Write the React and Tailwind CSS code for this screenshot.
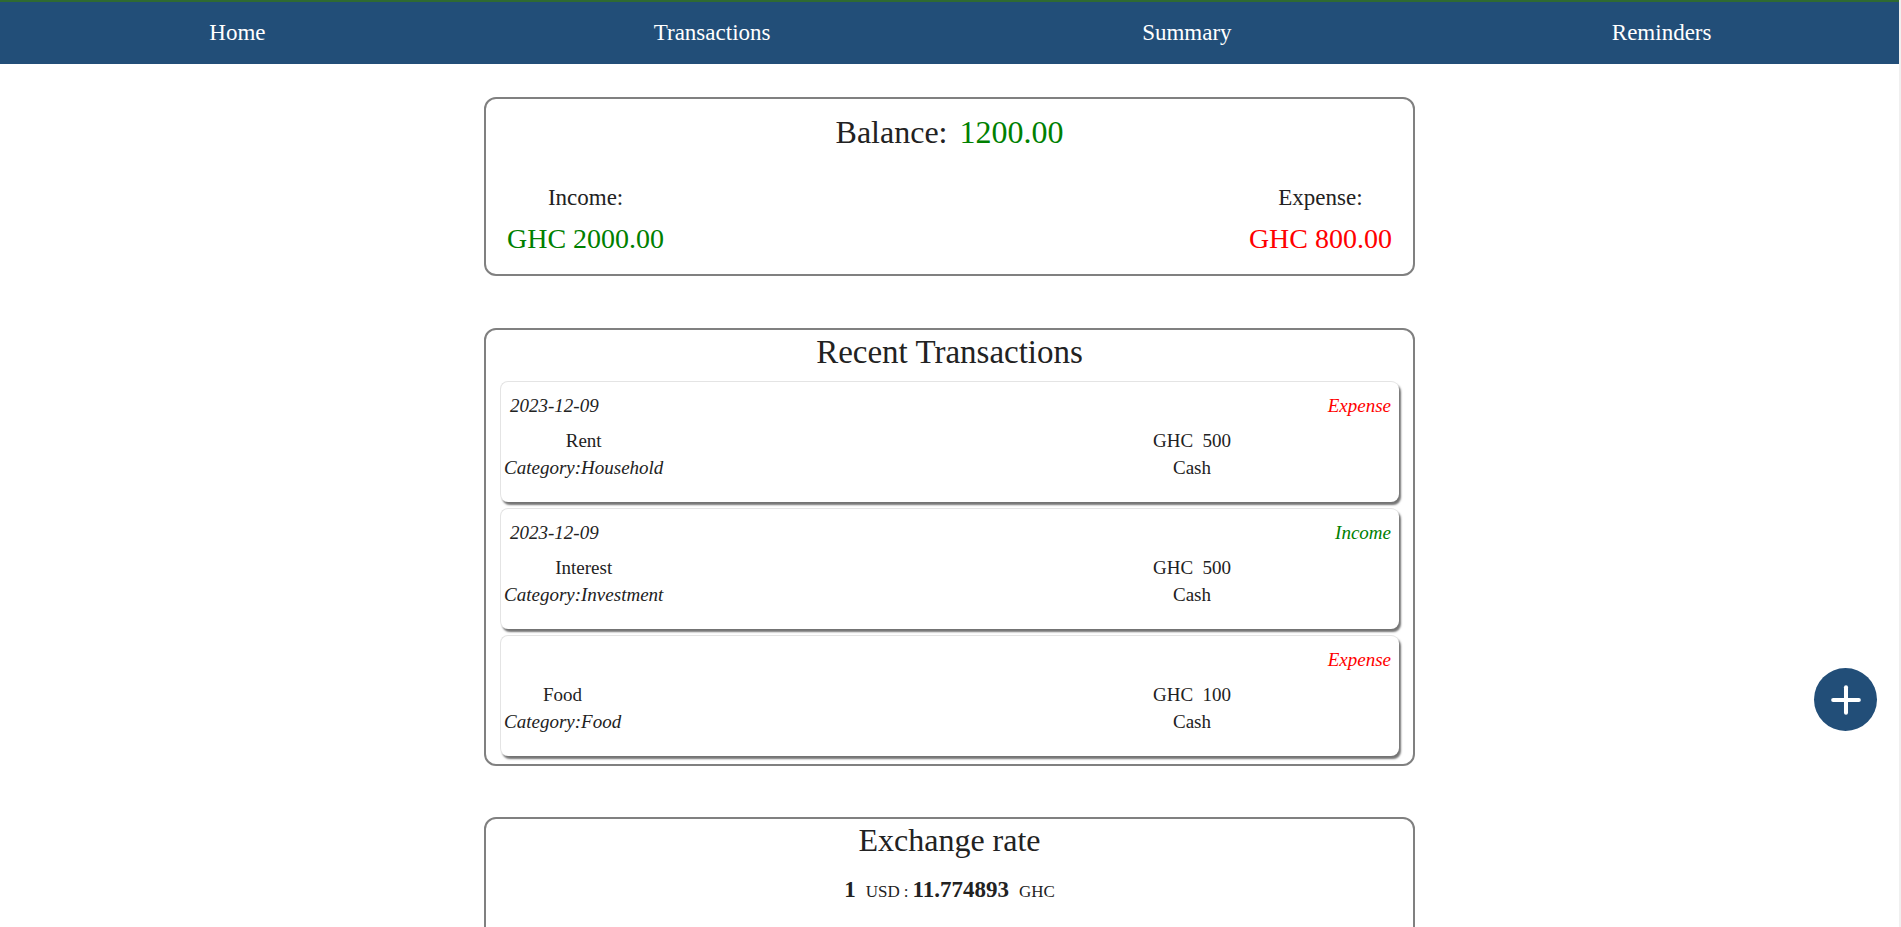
import { Plus } from "lucide-react";

const navItems = ["Home", "Transactions", "Summary", "Reminders"];

const transactions = [
  { date: "2023-12-09", type: "Expense", name: "Rent", category: "Household", amount: 500, method: "Cash" },
  { date: "2023-12-09", type: "Income", name: "Interest", category: "Investment", amount: 500, method: "Cash" },
  { date: "", type: "Expense", name: "Food", category: "Food", amount: 100, method: "Cash" },
];

const TransactionItem = ({ tx }) => (
  <div className="mb-[6px] rounded-[8px] border-t border-l border-[#e4e4e4] bg-white px-[3px] pt-[10px] pb-[21px] shadow-[2px_3px_2px_rgba(0,0,0,0.55)]">
    <div className="flex h-[27px] items-center justify-between pl-[6px] pr-[5px] text-[19px] italic leading-[27px]">
      <span className="text-[#222]">{tx.date}</span>
      <span className={tx.type === "Income" ? "text-[#008000]" : "text-[#ff0000]"}>{tx.type}</span>
    </div>
    <div className="mt-[8px] flex items-start text-[19px] leading-[27px] text-[#222]">
      <div className="flex flex-col items-center">
        <span>{tx.name}</span>
        <span className="italic">Category:{tx.category}</span>
      </div>
      <div className="ml-auto mr-[144px] flex w-[120px] flex-col items-center">
        <span className="whitespace-pre">{`GHC  ${tx.amount}`}</span>
        <span>{tx.method}</span>
      </div>
    </div>
  </div>
);

export default function App() {
  return (
    <div
      className="flex h-[927px] w-full overflow-hidden bg-white text-[#222]"
      style={{ fontFamily: '"Liberation Serif", "DejaVu Serif", serif' }}
    >
      <div className="relative flex-1">
        <nav className="grid h-[64px] grid-cols-4 border-t-2 border-[#2f6a32] bg-[#224e78] text-white">
          {navItems.map((item) => (
            <div key={item} className="flex items-center justify-center text-[23px]">
              {item}
            </div>
          ))}
        </nav>

        <main className="flex flex-col items-center">
          <section className="mt-[33px] w-[931px] rounded-[12px] border-2 border-[#808080] px-[21px] pt-[13px] pb-[17px]">
            <h2 className="text-center text-[32px] leading-[40px]">
              Balance: <span className="ml-[4px] text-[#008000]">1200.00</span>
            </h2>
            <div className="mt-[30px] flex justify-between">
              <div className="flex flex-col items-center">
                <span className="text-[23px] leading-[32px]">Income:</span>
                <span className="mt-[7px] text-[28px] leading-[36px] text-[#008000]">GHC 2000.00</span>
              </div>
              <div className="flex flex-col items-center">
                <span className="text-[23px] leading-[32px]">Expense:</span>
                <span className="mt-[7px] text-[28px] leading-[36px] text-[#ff0000]">GHC 800.00</span>
              </div>
            </div>
          </section>

          <section className="mt-[52px] w-[931px] rounded-[12px] border-2 border-[#808080] px-[14px] pt-[2px] pb-[2px]">
            <h2 className="text-center text-[33px] leading-[40px]">Recent Transactions</h2>
            <div className="mt-[9px]">
              {transactions.map((tx, i) => (
                <TransactionItem key={i} tx={tx} />
              ))}
            </div>
          </section>

          <section className="mt-[51px] h-[160px] w-[931px] rounded-[12px] border-2 border-[#808080] pt-[1px]">
            <h2 className="text-center text-[32px] leading-[40px]">Exchange rate</h2>
            <p className="mt-[15px] text-center leading-[30px]">
              <span className="text-[23px] font-bold">1</span>
              <span className="ml-[10px] text-[17px]">USD</span>
              <span className="ml-[4px] text-[17px]">:</span>
              <span className="ml-[4px] text-[23px] font-bold">11.774893</span>
              <span className="ml-[10px] text-[17px]">GHC</span>
            </p>
          </section>
        </main>

        <button
          type="button"
          className="absolute top-[668px] right-[22px] flex h-[63px] w-[63px] items-center justify-center rounded-full bg-[#224e78] text-white"
        >
          <Plus className="h-[44px] w-[44px]" strokeWidth={2.2} />
        </button>
      </div>
      <div className="w-[2px] bg-[#f0f0f0]" />
    </div>
  );
}
